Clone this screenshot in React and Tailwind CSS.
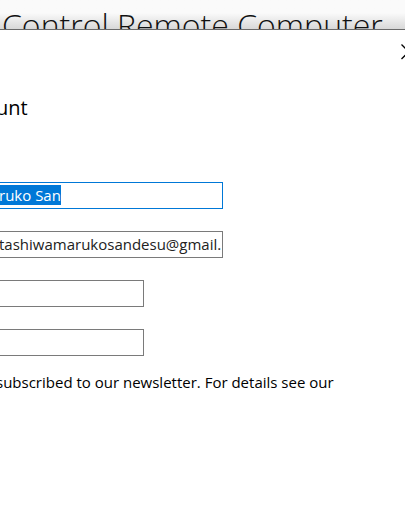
import { useEffect, useRef } from 'react';

const field =
  'block h-[27px] border border-l-0 border-[#7a7a7a] bg-white p-0 pb-0.5 text-[15px] leading-5 text-[#222] outline-none focus:border-[#0078d7] selection:bg-[#0078d7] selection:text-white';

function Field({ label, className, ...props }) {
  return (
    <label className="block">
      <span className="sr-only">{label}</span>
      <input {...props} className={`${field} ${className}`} />
    </label>
  );
}

export default function App() {
  const nameRef = useRef(null);

  useEffect(() => {
    nameRef.current.focus();
    nameRef.current.select();
  }, []);

  return (
    <div className="flex min-h-screen flex-col overflow-hidden bg-white font-['Open_Sans','Noto_Sans',sans-serif] text-black">
      <header className="h-[29px] overflow-hidden bg-linear-to-b from-[#fafafa] from-45% to-[#d8d8d8]">
        <h1 className="pl-0.5 pt-1 text-[32px] leading-[42px] font-light whitespace-nowrap text-[#111]">
          Control Remote Computer
        </h1>
      </header>
      <main className="flex-1 border-t border-[#6a6a6a]">
        <div className="flex h-11 justify-end overflow-hidden pt-3">
          <button type="button" aria-label="Close" className="-mr-3 h-5 w-4">
            <svg viewBox="0 0 16 20" className="h-5 w-4" fill="none" stroke="#000" strokeWidth="1.3">
              <path d="M0.5 2.5L15 17M0.5 17L15 2.5" />
            </svg>
          </button>
        </div>
        <h2 className="-ml-1 mt-5 text-xl leading-7">unt</h2>
        <form className="-ml-px mt-[60px] flex flex-col gap-[22px]">
          <Field ref={nameRef} label="Name" defaultValue="ruko San" className="w-56" />
          <Field label="Email" type="text" defaultValue="tashiwamarukosandesu@gmail." className="w-56" />
          <Field label="Password" type="password" className="w-[145px]" />
          <Field label="Confirm password" type="password" className="w-[145px]" />
        </form>
        <p className="-ml-1 mt-[14px] text-[15px] leading-6 whitespace-nowrap">
          subscribed to our newsletter. For details see our
        </p>
      </main>
    </div>
  );
}
